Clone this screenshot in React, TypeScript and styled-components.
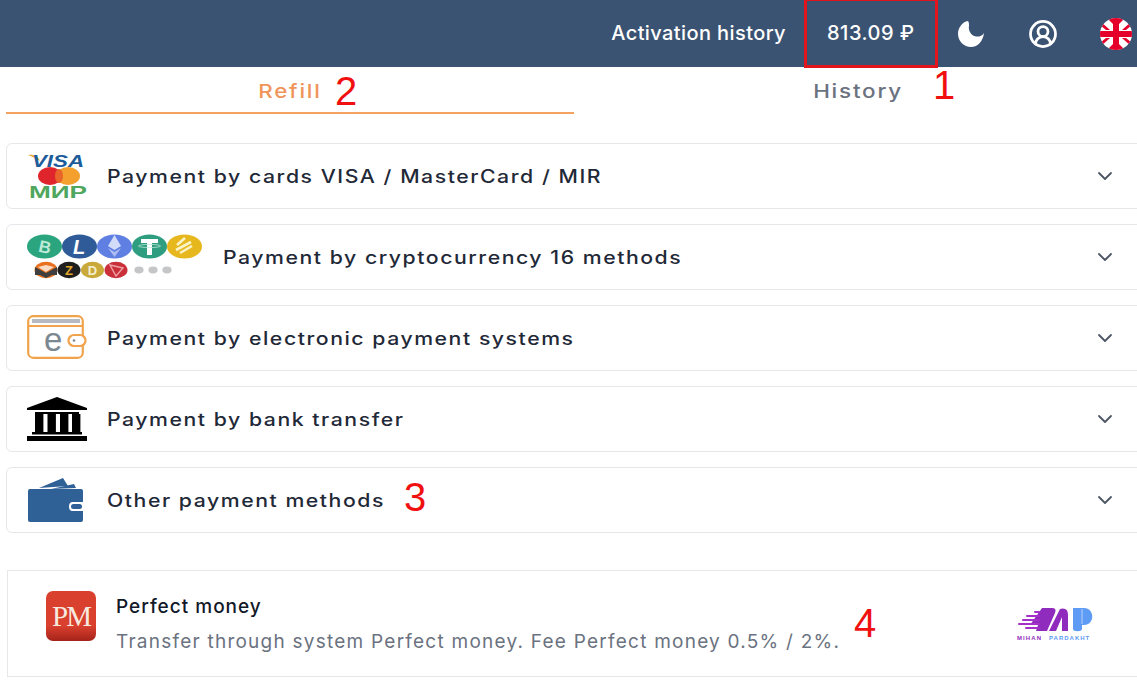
import styled, { createGlobalStyle } from 'styled-components';
import { ChevronDown, CircleUserRound } from 'lucide-react';

const GlobalStyle = createGlobalStyle`
  html, body {
    margin: 0;
    padding: 0;
    background: #fff;
    overflow: hidden;
  }
  * {
    box-sizing: border-box;
  }
`;

function VisaMirLogo() {
  return (
    <svg width="60" height="50" viewBox="0 0 60 50">
      <path d="M1 4 C6 3 11 5 13 10 C9 7 5 6 1 4Z" fill="#eaa93c" />
      <text x="5" y="16" fontFamily="Liberation Sans" fontWeight="700" fontStyle="italic" fontSize="17" fill="#1d5c9a" textLength="52" lengthAdjust="spacingAndGlyphs">VISA</text>
      <ellipse cx="23" cy="25" rx="12" ry="9" fill="#e0242c" />
      <ellipse cx="41" cy="25" rx="12" ry="9" fill="#f3a02e" />
      <ellipse cx="32" cy="25" rx="4" ry="7" fill="#e8642a" />
      <text x="2" y="47" fontFamily="Liberation Sans" fontWeight="700" fontSize="17" fill="#4fa65d" textLength="58" lengthAdjust="spacingAndGlyphs">МИР</text>
    </svg>
  );
}

function CoinRow() {
  const big = ['#2aa57d', '#2f5c99', '#5f7fe3', '#2f9d7f', '#e6b81e'];
  const small = [
    { x: 19, color: '#e8701f' },
    { x: 42, color: '#1f1f1f' },
    { x: 65.5, color: '#c9a93a' },
    { x: 89, color: '#c9303a' },
  ];
  return (
    <svg width="178" height="46" viewBox="0 0 178 46">
      {big.map((c, i) => (
        <ellipse key={c} cx={17.5 + i * 35} cy="12.5" rx="17.5" ry="12" fill={c} />
      ))}
      <text x="18" y="19" textAnchor="middle" fontFamily="Liberation Sans" fontWeight="700" fontSize="17" fill="#bfe9d8" transform="rotate(12 18 13)">B</text>
      <text x="52" y="20" textAnchor="middle" fontFamily="Liberation Sans" fontWeight="700" fontStyle="italic" fontSize="20" fill="#fff">L</text>
      <path d="M87.5 1 L94 12 L87.5 16 L81 12Z" fill="#d3dcf9" />
      <path d="M81 14 L87.5 18 L94 14 L87.5 23Z" fill="#aebcf2" />
      <path d="M114 5 H131 V9 H125 V21 H120 V9 H114Z" fill="#fff" />
      <ellipse cx="122.5" cy="12" rx="11" ry="1.6" fill="none" stroke="#bfe9d8" strokeWidth="0.8" />
      <path d="M150 11 L158 4 M149 16 L164 8 M153 19 L165 12" stroke="#fbf3c5" strokeWidth="2.6" />
      {small.map((c) => (
        <ellipse key={c.x} cx={c.x} cy="36" rx="11.5" ry="8.2" fill={c.color} />
      ))}
      <path d="M8 41 V33 L19 39 L30 33 V41 H25 L19 44 L13 41Z" fill="#3f3f3f" />
      <path d="M11 33 L19 38 L27 33 L19 31Z" fill="#fff" opacity="0.75" />
      <text x="42" y="41" textAnchor="middle" fontFamily="Liberation Sans" fontWeight="700" fontSize="13" fill="#e2a62b">Z</text>
      <text x="65.5" y="41" textAnchor="middle" fontFamily="Liberation Sans" fontWeight="700" fontSize="13" fill="#f5efcf">D</text>
      <path d="M83 31 L96 34 L89 42Z" fill="none" stroke="#f0a0a5" strokeWidth="1.4" />
      {[112, 126, 140].map((x) => (
        <ellipse key={x} cx={x} cy="36" rx="4.6" ry="3.4" fill="#c4c6c8" />
      ))}
    </svg>
  );
}

function EWalletLogo() {
  return (
    <svg width="60" height="46" viewBox="0 0 60 46">
      <rect x="1.2" y="1.2" width="54.6" height="41.6" rx="5" fill="#fff" stroke="#f0a34a" strokeWidth="2.2" />
      <path d="M2 11 H55" stroke="#f0a34a" strokeWidth="2" />
      <rect x="5" y="4" width="48" height="4" fill="#b6bac0" />
      <text x="17" y="36" fontFamily="Liberation Sans" fontSize="33" fill="#7b8791">e</text>
      <rect x="41.5" y="20" width="17" height="11" rx="5.5" fill="#fff" stroke="#f0a34a" strokeWidth="2.2" />
      <circle cx="47" cy="25.5" r="1.3" fill="#7b8791" />
    </svg>
  );
}

function BankLogo() {
  return (
    <svg width="60" height="44" viewBox="0 0 60 44">
      <path d="M30 0 L60 11 V13 H0 V11Z" fill="#000" />
      <path d="M8 15 H52 V17 H8Z" fill="#000" />
      {[8, 20.5, 33, 45].map((x) => (
        <rect key={x} x={x} y="17" width="8.4" height="20" fill="#000" />
      ))}
      <rect x="5" y="35" width="50" height="2.5" fill="#000" />
      <rect x="0" y="39" width="60" height="5" fill="#000" />
    </svg>
  );
}

function WalletLogo() {
  return (
    <svg width="58" height="44" viewBox="0 0 58 44">
      <path d="M12 10 L36 0 L41 8Z" fill="#2f6197" />
      <path d="M24 11 L47 6 L49 10Z" fill="#2f6197" />
      <rect x="1" y="11" width="55" height="33" rx="2" fill="#2f6197" />
      <path d="M56 24 H45 C41 24 41 33 45 33 H56Z" fill="#fff" />
      <rect x="44" y="26" width="11" height="5" rx="2.5" fill="#2f6197" />
    </svg>
  );
}

function MihanLogo() {
  const lines = [
    { y: 4, x: 18 },
    { y: 8, x: 10 },
    { y: 12, x: 6 },
    { y: 16, x: 2 },
    { y: 20, x: 9 },
  ];
  return (
    <svg width="78" height="33" viewBox="0 0 78 33">
      <path d="M25 1 H36 Q41 1 39 6 L31 24 H20 L22 18 H14 L26 1Z" fill="#8f2bbd" />
      <path d="M44 2 Q52 0 52 8 V24 H46 V10 L40 24 H33Z" fill="#8f2bbd" />
      {lines.map((l) => (
        <rect key={l.y} x={l.x} y={l.y} width={24 - l.x} height="2" rx="1" fill="#a52fc9" />
      ))}
      <path d="M57 1 H68 C79 1 79 18 68 18 H66 V22 C66 25 57 25 57 22Z" fill="#5e9bf5" />
      <path d="M66 2 V17" stroke="#cfe0fb" strokeWidth="0.8" />
      <text x="1" y="32.5" fontFamily="Liberation Sans" fontWeight="700" fontSize="6" fill="#8f2bbd" letterSpacing="1.1">MIHAN</text>
      <text x="33" y="32.5" fontFamily="Liberation Sans" fontWeight="700" fontSize="6" fill="#5e9bf5" letterSpacing="1">PARDAKHT</text>
    </svg>
  );
}

function MoonIcon() {
  return (
    <svg width="26" height="26" viewBox="0 0 26 26">
      <path d="M10 0 C4 1 0 7 0 13 C0 20 6 26 13 26 C20 26 25 20 26 12 C24 15 21 16 18 15.5 C13 15 10 9 11 5 C11 3 11 1 10 0Z" fill="#fff" />
    </svg>
  );
}

function FlagIcon() {
  return (
    <svg width="32" height="32" viewBox="0 0 32 32">
      <defs>
        <clipPath id="flagCircle">
          <circle cx="16" cy="16" r="16" />
        </clipPath>
      </defs>
      <g clipPath="url(#flagCircle)">
        <rect width="32" height="32" fill="#fff" />
        <path d="M0 3 L10 12 H6 L0 7Z M32 3 L22 12 H26 L32 7Z M0 29 L10 20 H6 L0 25Z M32 29 L22 20 H26 L32 25Z" fill="#e4002b" />
        <path d="M7 0 L13 6 V0Z M25 0 L19 6 V0Z M7 32 L13 26 V32Z M25 32 L19 26 V32Z" fill="#e4002b" />
        <rect x="13" width="6" height="32" fill="#e4002b" />
        <rect y="13" width="32" height="6" fill="#e4002b" />
      </g>
    </svg>
  );
}

const methods = [
  { title: 'Payment by cards VISA / MasterCard / MIR', logo: <VisaMirLogo />, wide: false },
  { title: 'Payment by cryptocurrency 16 methods', logo: <CoinRow />, wide: true },
  { title: 'Payment by electronic payment systems', logo: <EWalletLogo />, wide: false },
  { title: 'Payment by bank transfer', logo: <BankLogo />, wide: false },
  { title: 'Other payment methods', logo: <WalletLogo />, wide: false },
];

export default function App() {
  return (
    <Page>
      <GlobalStyle />
      <Header>
        <HeaderLink>Activation history</HeaderLink>
        <Balance>813.09 ₽</Balance>
        <MoonSlot>
          <MoonIcon />
        </MoonSlot>
        <UserSlot>
          <CircleUserRound size={30} color="#fff" strokeWidth={2.2} />
        </UserSlot>
        <FlagSlot>
          <FlagIcon />
        </FlagSlot>
      </Header>
      <Tabs>
        <Tab $active>
          <TabLabel>Refill</TabLabel>
        </Tab>
        <Tab>
          <TabLabel>History</TabLabel>
        </Tab>
      </Tabs>
      <MethodList>
        {methods.map((item) => (
          <MethodCard key={item.title}>
            <LogoSlot $wide={item.wide}>{item.logo}</LogoSlot>
            <MethodTitle>{item.title}</MethodTitle>
            <ChevronDown size={24} color="#4b5563" strokeWidth={1.8} />
          </MethodCard>
        ))}
      </MethodList>
      <Provider>
        <PmBadge>PM</PmBadge>
        <ProviderText>
          <ProviderName>Perfect money</ProviderName>
          <ProviderDescription>
            Transfer through system Perfect money. Fee Perfect money 0.5% / 2%.
          </ProviderDescription>
        </ProviderText>
        <ProviderBrand>
          <MihanLogo />
        </ProviderBrand>
      </Provider>
      <HighlightBox />
      <Marker $x={933} $y={62}>1</Marker>
      <Marker $x={335} $y={68}>2</Marker>
      <Marker $x={404} $y={474}>3</Marker>
      <Marker $x={854} $y={600}>4</Marker>
    </Page>
  );
}

const Page = styled.div`
  position: relative;
  width: 1137px;
  height: 680px;
  overflow: hidden;
  background: #fff;
  font-family: Inter, 'Liberation Sans', sans-serif;
`;
const Header = styled.header`
  display: flex;
  align-items: center;
  justify-content: flex-end;
  height: 67px;
  padding-right: 5px;
  background: #3b5372;
  color: #fff;
`;
const HeaderLink = styled.a`
  margin: 0 40px 2px 0;
  font-size: 20px;
  font-weight: 500;
  letter-spacing: 0.4px;
`;
const Balance = styled.div`
  width: 132px;
  margin-bottom: 2px;
  padding-left: 1px;
  font-size: 20px;
  font-weight: 500;
  letter-spacing: 0.5px;
  white-space: nowrap;
`;
const MoonSlot = styled.div`
  display: flex;
  margin-right: 44px;
`;
const UserSlot = styled.div`
  display: flex;
  margin-right: 42px;
`;
const FlagSlot = styled.div`
  display: flex;
`;
const Tabs = styled.div`
  display: flex;
  height: 47px;
  padding-left: 6px;
`;
const Tab = styled.div<{ $active?: boolean }>`
  display: flex;
  flex-shrink: 0;
  justify-content: center;
  width: 568px;
  padding-top: 13px;
  color: ${(p) => (p.$active ? '#f0955a' : '#6b7280')};
  border-bottom: 2px solid ${(p) => (p.$active ? '#f4a261' : 'transparent')};
`;
const TabLabel = styled.span`
  font-size: 19px;
  font-weight: 500;
  letter-spacing: 1.5px;
  transform: scaleX(1.18);
`;
const MethodList = styled.div`
  display: flex;
  flex-direction: column;
  gap: 15px;
  margin: 29px -6px 0 6px;
`;
const MethodCard = styled.div`
  display: flex;
  align-items: center;
  height: 66px;
  padding: 0 25px 0 20px;
  background: #fff;
  border: 1px solid #e5e7eb;
  border-radius: 6px;
`;
const LogoSlot = styled.div<{ $wide: boolean }>`
  display: flex;
  align-items: center;
  flex-shrink: 0;
  width: ${(p) => (p.$wide ? 196 : 80)}px;
`;
const MethodTitle = styled.div`
  flex: 1;
  font-size: 18px;
  font-weight: 450;
  letter-spacing: 1.3px;
  color: #1f2937;
  transform: scaleX(1.18);
  transform-origin: left center;
`;
const Provider = styled.section`
  display: flex;
  align-items: flex-start;
  height: 107px;
  margin: 37px -6px 0 7px;
  padding: 20px 48px 0 38px;
  border: 1px solid #e5e7eb;
`;
const PmBadge = styled.div`
  display: flex;
  align-items: center;
  justify-content: center;
  flex-shrink: 0;
  width: 50px;
  height: 50px;
  border-radius: 7px;
  background: linear-gradient(#d9402e 70%, #a5231a);
  color: #f7e9df;
  font-family: 'Liberation Serif', serif;
  font-size: 29px;
  letter-spacing: -2px;
`;
const ProviderText = styled.div`
  flex: 1;
  margin: 2px 0 0 20px;
`;
const ProviderName = styled.div`
  font-size: 19px;
  font-weight: 450;
  letter-spacing: 1px;
  line-height: 28px;
  color: #111827;
`;
const ProviderDescription = styled.div`
  margin-top: 9px;
  font-size: 19px;
  letter-spacing: 1.24px;
  line-height: 24px;
  color: #6b7280;
`;
const ProviderBrand = styled.div`
  display: flex;
  margin-top: 16px;
`;
const HighlightBox = styled.div`
  position: absolute;
  left: 804px;
  top: -2px;
  width: 134px;
  height: 70px;
  border: 3px solid #e2141c;
`;
const Marker = styled.span<{ $x: number; $y: number }>`
  position: absolute;
  left: ${(p) => p.$x}px;
  top: ${(p) => p.$y}px;
  font-family: 'Liberation Sans', sans-serif;
  font-size: 40px;
  line-height: 46px;
  color: #f01010;
`;
